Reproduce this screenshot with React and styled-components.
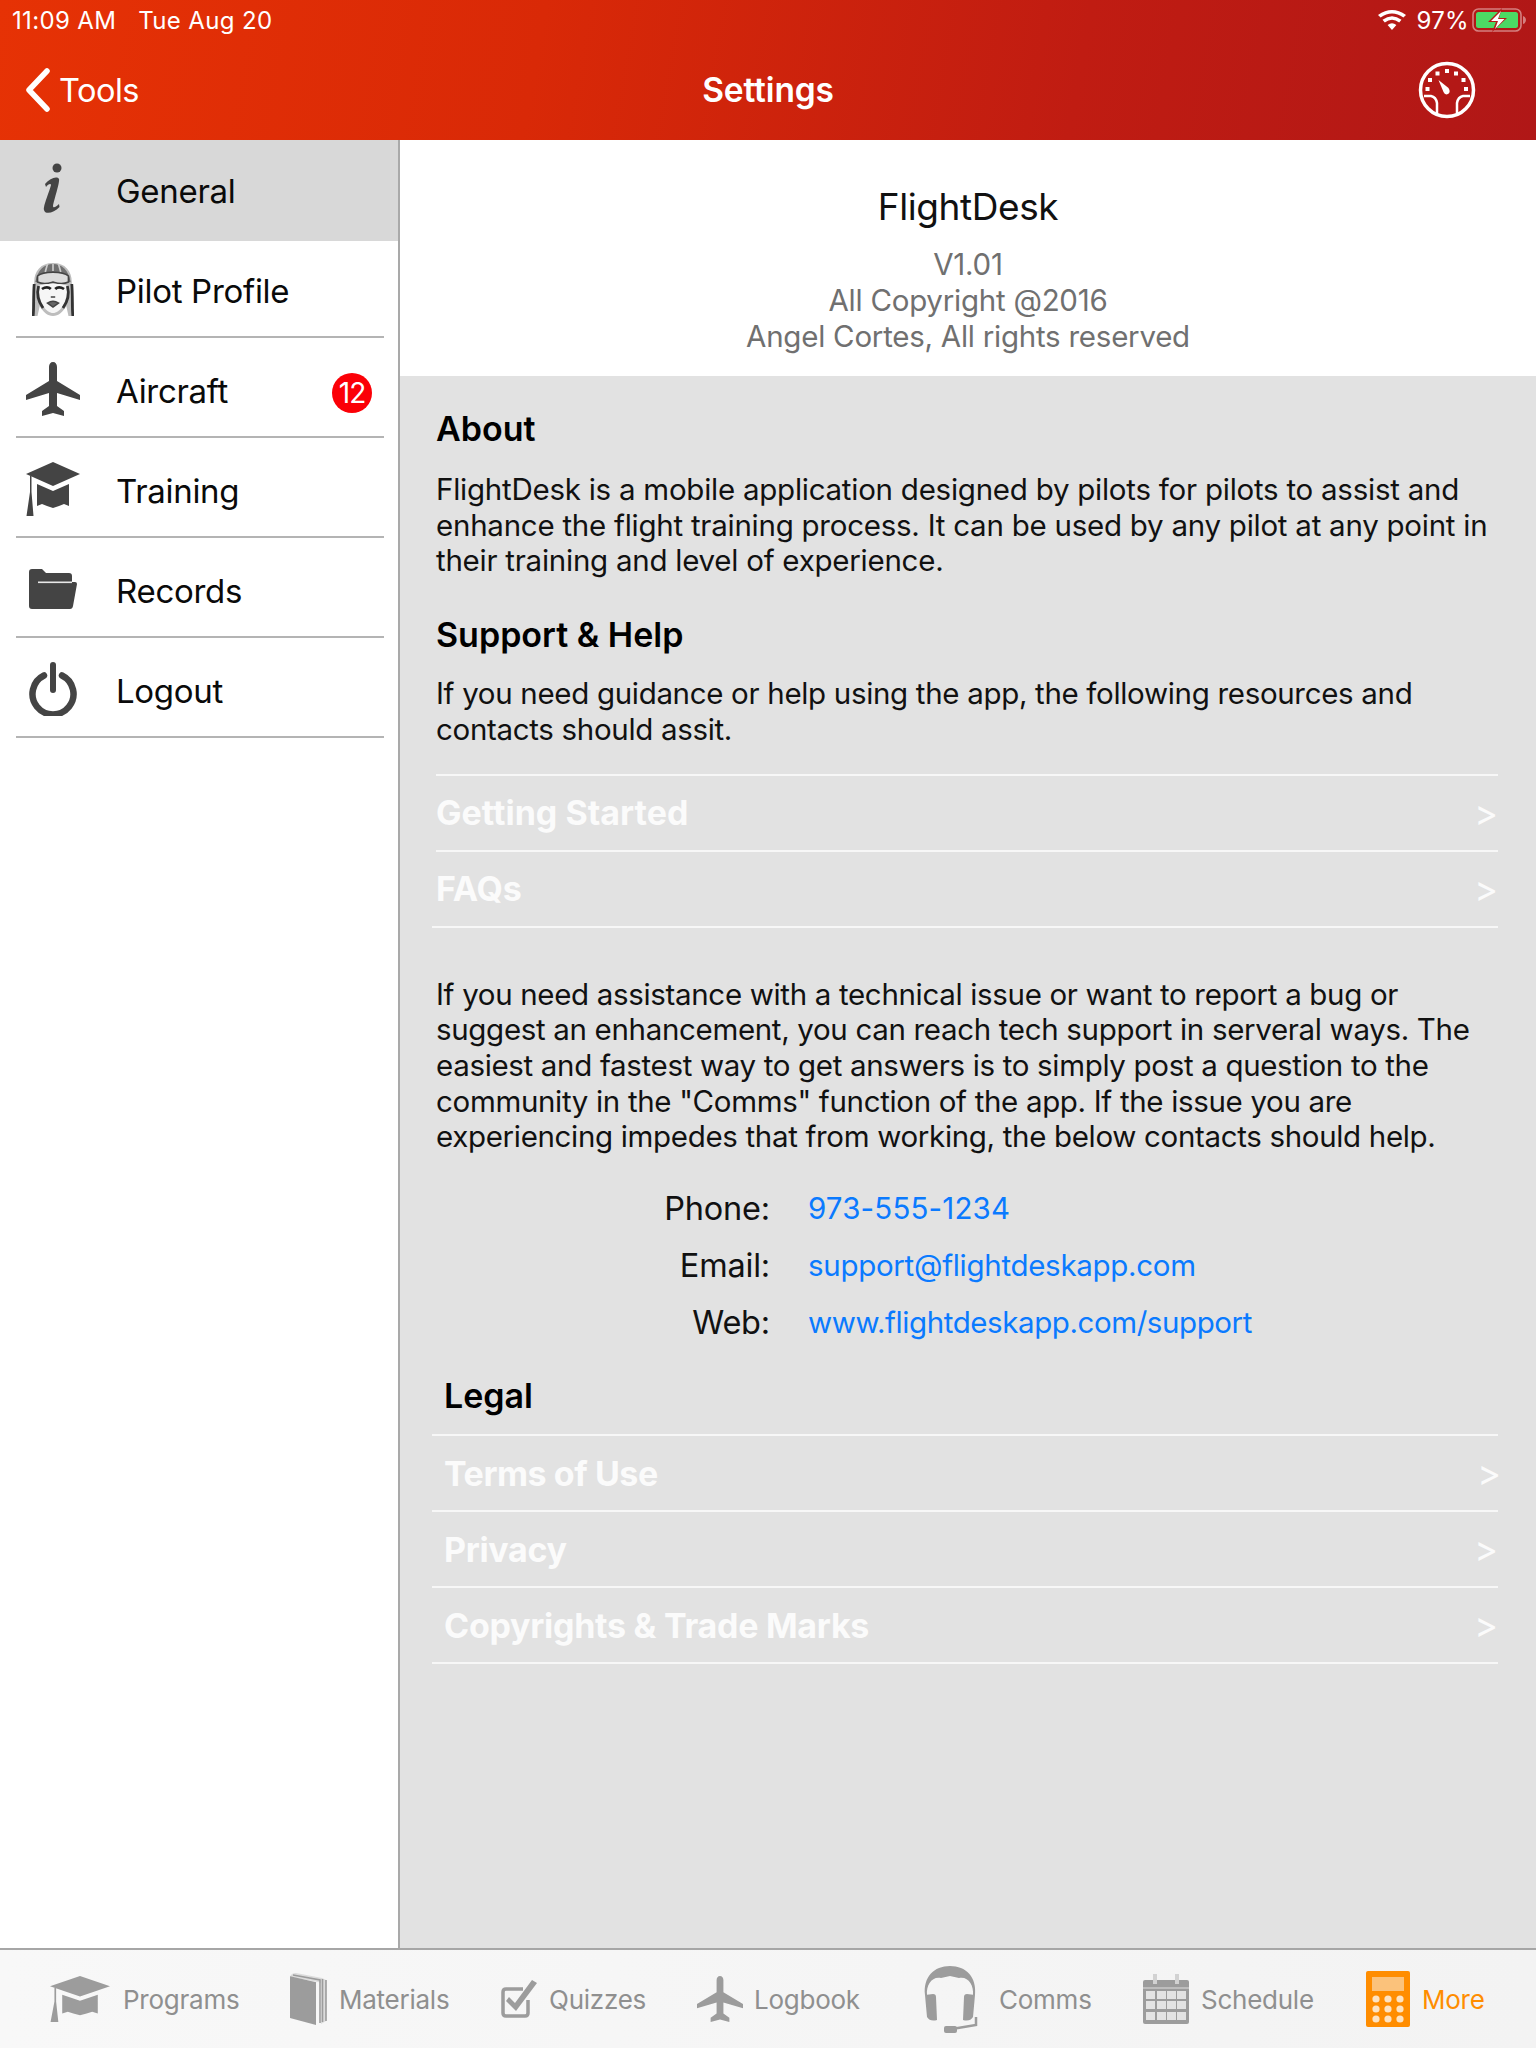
import React from "react";
import styled, { createGlobalStyle } from "styled-components";

const Global = createGlobalStyle`
  html, body { margin: 0; padding: 0; background: #fff; }
  body { font-family: Inter, "Liberation Sans", sans-serif; }
`;
const Page = styled.div`
  width: 1536px; height: 2048px; display: flex; flex-direction: column; overflow: hidden; background: #fff;
`;
const Header = styled.header`
  height: 140px; flex: none; position: relative; color: #fff;
  background: linear-gradient(100deg, #e63205 0%, #d92907 35%, #c01c12 70%, #b01717 100%);
`;
const StatusBar = styled.div`
  height: 40px; display: flex; align-items: center; padding: 0 10px 0 12px; font-size: 24px; letter-spacing: 0.35px;
`;
const StatusText = styled.span`
  margin: 0 ${p => p.$right || 0}px 0 ${p => p.$left || 0}px;
`;
const Spacer = styled.div`flex: 1;`;
const NavBar = styled.div`
  height: 100px; display: grid; grid-template-columns: 1fr auto 1fr; align-items: center; padding: 0 25px 8px;
`;
const Back = styled.div`
  display: flex; align-items: center; gap: 8px; font-size: 32.5px; letter-spacing: -0.5px;
`;
const Title = styled.div`
  font-size: 33.5px; font-weight: 600; letter-spacing: -0.15px;
`;
const NavRight = styled.div`
  display: flex; justify-content: flex-end; padding-right: 35px;
`;
const Body = styled.div`
  flex: 1; display: flex; min-height: 0; border-top: 1px solid #a9a9a9; margin-top: -1px;
`;
const Sidebar = styled.nav`
  width: 398px; flex: none; border-right: 2px solid #a9a9a9; background: #fff;
`;
const SideRow = styled.div`
  height: ${p => p.$h}px; box-sizing: border-box; padding-top: ${p => p.$pad}px; position: relative; display: flex; align-items: center; padding-left: 26px;
  background: ${p => p.$active ? "#d8d8d8" : "#fff"};
`;
const SideRule = styled.div`
  height: 2px; margin: 0 14px 0 16px; background: #b4b4b4;
`;
const SideIcon = styled.div`
  width: 54px; height: 54px; margin-bottom: 4px; display: flex; align-items: center; justify-content: center; color: #444; flex: none;
`;
const SideLabel = styled.span`
  margin-left: 36px; font-size: 33px; color: #0a0a0a; letter-spacing: -0.3px;
`;
const Badge = styled.span`
  position: absolute; right: 26px; top: 35px; width: 40px; height: 40px; border-radius: 50%; background: #fb0007; color: #fff;
  font-size: 28px; display: flex; align-items: center; justify-content: center; letter-spacing: -1px;
`;
const Main = styled.main`
  flex: 1; display: flex; flex-direction: column; min-width: 0;
`;
const Intro = styled.section`
  height: 236px; flex: none; background: #fff; display: flex; flex-direction: column; align-items: center; padding-top: 46px; box-sizing: border-box;
`;
const AppName = styled.h1`
  margin: 0 0 18px; font-size: 37px; line-height: 42px; font-weight: 400; color: #111; letter-spacing: -0.4px;
`;
const IntroLine = styled.div`
  font-size: 29.5px; line-height: 36px; color: #707070; letter-spacing: -0.25px;
`;
const Panel = styled.section`
  flex: 1; background: #e2e2e2; padding: 35px 38px 0 32px; min-height: 0;
`;
const Heading = styled.h2`
  margin: ${p => p.$top || 0}px 0 0 ${p => p.$left || 4}px; font-size: 34px; line-height: 36px; font-weight: 600; color: #000; letter-spacing: 0;
`;
const Prose = styled.p`
  margin: ${p => p.$top || 0}px 0 0 4px; font-size: 29.5px; line-height: 35.7px; color: #111; white-space: nowrap;
  letter-spacing: ${p => p.$ls ?? -0.25}px;
`;
const LinkList = styled.div`
  margin-top: ${p => p.$top || 0}px;
`;
const LinkRow = styled.div`
  height: 74px; display: flex; align-items: center; justify-content: space-between;
  border-bottom: 2px solid #f7f7f7; color: #fbfbfb; padding: 0 0 0 ${p => p.$left || 4}px;
  ${p => p.$first ? `border-top: 2px solid #f7f7f7; margin-left: ${p.$inset || 0}px; padding-left: ${(p.$left || 4) - (p.$inset || 0)}px;` : ""}
`;
const LinkText = styled.span`
  font-size: 34px; font-weight: 700; letter-spacing: ${p => p.$ls ?? -0.15}px;
`;
const Chevron = styled.span`
  font-size: 36px; font-weight: 400; margin-right: ${p => p.$shift || 0}px;
`;
const Contact = styled.div`
  margin-top: 25px; display: grid; grid-template-columns: 338px auto; column-gap: 38px; justify-content: start; grid-auto-rows: 56.8px; align-items: center;
`;
const ContactLabel = styled.span`
  font-size: 32.5px; color: #111; text-align: right; letter-spacing: -0.2px;
`;
const ContactLink = styled.span`
  font-size: 29.5px; color: #0a7aff; letter-spacing: ${p => p.$ls}px;
`;
const TabBar = styled.footer`
  height: 100px; flex: none; box-sizing: border-box; border-top: 2px solid #a6a6a6; background: linear-gradient(90deg, #f8f8f8, #f3f3f3);
  display: flex; align-items: center; padding-left: 50px; position: relative;
`;
const Tab = styled.div`
  display: flex; align-items: center; flex: none; width: ${p => p.$w}px; gap: ${p => p.$gap || 12}px;
  color: ${p => p.$active ? "#ff8d00" : "#9c9c9c"};
`;
const TabLabel = styled.span`
  font-size: 26px; color: ${p => p.$active ? "#ff8d00" : "#8f8f8f"}; letter-spacing: -0.25px;
`;
const TabIconBox = styled.div`
  flex: none; display: flex; width: ${p => p.$w}px; justify-content: center;
`;
const Glyph = styled.svg`
  display: block; flex: none;
`;

const InfoIcon = () => (
  <Glyph width="54" height="54" viewBox="0 0 54 54">
    <circle cx="31" cy="6" r="4.5" fill="currentColor" />
    <path d="M19 22 C24 16 31 14 33 17 C34 20 28 38 27 44 C27 46 29 46 33 42 L33.5 45 C28 51 19 53 18 48 C17 44 24 28 25 23 C25 21 22 22 20 25 Z" fill="currentColor" />
  </Glyph>
);
const PilotIcon = () => (
  <Glyph width="42" height="54" viewBox="8 0 38 54" preserveAspectRatio="none">
    <path d="M27 1 C38 1 44 9 44 20 C44 30 47 40 46 54 L41 54 L39 44 C36 50 32 54 27 54 C22 54 18 50 15 44 L13 54 L8 54 C7 40 10 30 10 20 C10 9 16 1 27 1 Z" fill="#bdbdbd" />
    <path d="M27 2 C35 2 41 8 43 20 L11 20 C13 8 19 2 27 2 Z" fill="#707070" />
    <path d="M22 2 L20 10 M32 2 L34 10 M27 2 V9" stroke="#ccc" strokeWidth="1.5" />
    <path d="M13 14 C18 9 36 9 41 14 L41 20 C35 23 30 21 27 20 C24 21 19 23 13 20 Z" fill="#dcdcdc" stroke="#444" strokeWidth="1.5" />
    <path d="M14 24 C14 42 21 51 27 51 C33 51 40 42 40 24 C36 21 18 21 14 24 Z" fill="#f6f6f6" />
    <path d="M17 27 C20 25 23 25 25 27 M29 27 C31 25 34 25 37 27" stroke="#222" strokeWidth="2.5" fill="none" />
    <path d="M25 35 L29 35 M22 41 C25 39 29 39 32 41 L27 45 Z" stroke="#444" strokeWidth="1.5" fill="#666" />
    <path d="M10 22 C9 34 10 46 9 54 M44 22 C45 34 44 46 45 54" stroke="#333" strokeWidth="2.5" fill="none" />
    <path d="M14 24 C12 32 14 40 18 46 M40 24 C42 32 40 40 36 46" stroke="#333" strokeWidth="2.5" fill="none" />
  </Glyph>
);
const PlaneIcon = ({ size = 54 }) => (
  <Glyph width={size} height={size} viewBox="0 0 54 54">
    <path d="M27 0 C29.5 0 31 2 31 5 V19 L54 33 V38 L31 31 V44 L38 49 V54 L27 51 L16 54 V49 L23 44 V31 L0 38 V33 L23 19 V5 C23 2 24.5 0 27 0 Z" fill="currentColor" />
  </Glyph>
);
const CapIcon = ({ w = 54, h = 54 }) => (
  <Glyph width={w} height={h} viewBox="0 0 54 54" preserveAspectRatio="none">
    <path d="M27 0 L54 12 L27 24 L0 12 Z" fill="currentColor" />
    <path d="M11 22 L27 29 L43 22 V44 L38 42 L33 44 L27 46 L21 44 L16 42 L11 44 Z" fill="currentColor" />
    <path d="M4 14 V30 L0.5 54 H7.5 L5.5 30 V14 Z" fill="currentColor" />
  </Glyph>
);
const FolderIcon = () => (
  <Glyph width="48" height="40" viewBox="0 0 48 40">
    <path d="M0 3 Q0 0 3 0 H13 L17 4 H40 Q43 4 43 7 V13 H46 Q48 13 48 15 L44 37 Q43.5 40 41 40 H3 Q0 40 0 37 Z" fill="currentColor" />
    <rect x="9" y="12.5" width="34" height="1.6" fill="#e8e8e8" />
  </Glyph>
);
const PowerIcon = () => (
  <Glyph width="48" height="54" viewBox="0 0 48 54">
    <path d="M15 13.5 A20.5 20.5 0 1 0 33 13.5" fill="none" stroke="currentColor" strokeWidth="6.5" strokeLinecap="round" />
    <path d="M24 3 V28" fill="none" stroke="currentColor" strokeWidth="6" strokeLinecap="round" />
  </Glyph>
);
const GaugeIcon = () => (
  <Glyph width="58" height="58" viewBox="0 0 58 58">
    <circle cx="29" cy="29" r="26.5" fill="none" stroke="#fff" strokeWidth="3.5" />
    <path d="M6 35 H13 Q18 36 19 42 V53 M52 35 H45 Q40 36 39 42 V53" fill="none" stroke="#fff" strokeWidth="2.5" />
    {[[9.5, 28], [12, 19], [19.5, 12.5], [29, 10], [38, 12.5], [45.5, 19], [48, 28]].map(([x, y]) => (
      <rect key={x} x={x - 2} y={y - 2} width="4" height="4" fill="#fff" />
    ))}
    <path d="M20.5 19 L30.5 27 Q33 31 30 33 Q27 34.5 25.5 31 Z" fill="#fff" />
  </Glyph>
);
const WifiIcon = () => (
  <Glyph width="28" height="20" viewBox="0 0 28 20">
    <path d="M14 20 L9.6 15 Q14 11.6 18.4 15 Z M6.8 12.4 L4.5 9.7 Q14 2.6 23.5 9.7 L21.2 12.4 Q14 7 6.8 12.4 Z M2.6 7.6 L0 5 Q14 -5 28 5 L25.4 7.6 Q14 -0.6 2.6 7.6 Z" fill="#fff" />
  </Glyph>
);
const BatteryIcon = () => (
  <Glyph width="54" height="24" viewBox="0 0 54 24">
    <rect x="1" y="1" width="48" height="22" rx="5.5" fill="none" stroke="#fff" strokeOpacity="0.45" strokeWidth="1.6" />
    <path d="M51 8 Q54 9 54 12 Q54 15 51 16 Z" fill="#fff" fillOpacity="0.45" />
    <rect x="4" y="4" width="42" height="16" rx="2.5" fill="#4cd964" />
    <path d="M30 0 L16 14 H24 L20 24 L35 10 H27 Z" fill="#b41816" />
    <path d="M29 3 L19 13 H26 L23 21 L32.5 11 H26 Z" fill="#fff" />
  </Glyph>
);
const BookIcon = () => (
  <Glyph width="37" height="52" viewBox="0 0 37 52">
    <path d="M0 4 L26 10 V52 L0 45 Z" fill="currentColor" />
    <path d="M0 4 Q1 0 6 0 L32 5 L36 7 V48 L31 51 V10 L28 9 Z" fill="#dcdcdc" />
    <path d="M3 2 L30 7 V50 M32.5 6 V49 M36 7 V48 M0 4 L26 10" stroke="currentColor" strokeWidth="1.6" fill="none" />
  </Glyph>
);
const QuizIcon = () => (
  <Glyph width="36" height="38" viewBox="0 0 36 38">
    <path d="M27 20 V33 Q27 36 24 36 H5 Q2 36 2 33 V12 Q2 9 5 9 H22" fill="none" stroke="currentColor" strokeWidth="3.5" />
    <path d="M8 17 L14 23 L31 0 L36 3 L15 31 L5 21 Z" fill="currentColor" />
  </Glyph>
);
const HeadsetIcon = () => (
  <Glyph width="56" height="68" viewBox="0 0 56 68">
    <path d="M3 30 C1 12 12 1 28 1 C44 1 55 12 53 30 L51 30 C52 20 46 11 37 13 L28 11 L19 13 C10 11 4 20 5 30 Z" fill="currentColor" />
    <path d="M3 30 L11 29 Q14 29 14 32 L15 55 Q8 57 5 52 Z" fill="currentColor" />
    <path d="M53 30 L45 29 Q42 29 42 32 L41 55 Q48 57 51 52 Z" fill="currentColor" />
    <path d="M54 52 V60 L24 65" fill="none" stroke="currentColor" strokeWidth="2.5" />
    <rect x="22" y="61" width="13" height="7" rx="2" fill="currentColor" />
  </Glyph>
);
const CalendarIcon = () => (
  <Glyph width="46" height="50" viewBox="0 0 46 50">
    <rect x="0" y="6" width="46" height="44" rx="2" fill="currentColor" />
    <rect x="10" y="0" width="4" height="10" fill="#d2d2d2" />
    <rect x="32" y="0" width="4" height="10" fill="#d2d2d2" />
    <rect x="0" y="13" width="46" height="2" fill="#bdbdbd" />
    {[17, 27, 38].flatMap(y => [3, 14, 24, 34].map(x => (
      <rect key={`${x}-${y}`} x={x} y={y} width="9" height="8" fill="#e3e3e3" />
    )))}
  </Glyph>
);
const CalcIcon = () => (
  <Glyph width="44" height="56" viewBox="0 0 44 56">
    <rect width="44" height="56" rx="2" fill="currentColor" />
    <rect x="6" y="6" width="32" height="14" fill="#fbc27b" />
    {[28, 38, 48].flatMap(y => [10, 22, 34].map(x => (
      <circle key={`${x}-${y}`} cx={x} cy={y} r="3.6" fill="#fde3c2" />
    )))}
  </Glyph>
);

const sideItems = [
  { label: "General", icon: <InfoIcon />, active: true, h: 101, pad: 0 },
  { label: "Pilot Profile", icon: <PilotIcon />, h: 95, pad: 5, rule: true },
  { label: "Aircraft", icon: <PlaneIcon />, badge: 12, h: 98, pad: 8, rule: true },
  { label: "Training", icon: <CapIcon />, h: 98, pad: 8, rule: true },
  { label: "Records", icon: <FolderIcon />, h: 98, pad: 8, rule: true },
  { label: "Logout", icon: <PowerIcon />, h: 98, pad: 8, rule: true },
];
const tabs = [
  { label: "Programs", w: 240, iw: 60, gap: 13, icon: <CapIcon w={60} h={46} /> },
  { label: "Materials", w: 211, iw: 37, gap: 12, icon: <BookIcon /> },
  { label: "Quizzes", w: 196, iw: 36, gap: 12, icon: <QuizIcon /> },
  { label: "Logbook", w: 225, iw: 46, gap: 11, icon: <PlaneIcon size={46} /> },
  { label: "Comms", w: 221, iw: 56, gap: 21, icon: <HeadsetIcon /> },
  { label: "Schedule", w: 223, iw: 46, gap: 12, icon: <CalendarIcon /> },
  { label: "More", w: 118, iw: 44, gap: 12, icon: <CalcIcon />, active: true },
];

export default function App() {
  return (
    <Page>
      <Global />
      <Header>
        <StatusBar>
          <StatusText $right={22}>11:09 AM</StatusText>
          <StatusText>Tue Aug 20</StatusText>
          <Spacer />
          <WifiIcon />
          <StatusText $left={10} $right={3}>97%</StatusText>
          <BatteryIcon />
        </StatusBar>
        <NavBar>
          <Back>
            <Glyph width="26" height="44" viewBox="0 0 26 44">
              <path d="M22 3 L4 22 L22 41" fill="none" stroke="#fff" strokeWidth="5.5" strokeLinecap="round" strokeLinejoin="round" />
            </Glyph>
            Tools
          </Back>
          <Title>Settings</Title>
          <NavRight><GaugeIcon /></NavRight>
        </NavBar>
      </Header>
      <Body>
        <Sidebar>
          {sideItems.map(it => (
            <React.Fragment key={it.label}>
              <SideRow $active={it.active} $h={it.h} $pad={it.pad}>
                <SideIcon>{it.icon}</SideIcon>
                <SideLabel>{it.label}</SideLabel>
                {it.badge ? <Badge>{it.badge}</Badge> : null}
              </SideRow>
              {it.rule ? <SideRule /> : null}
            </React.Fragment>
          ))}
        </Sidebar>
        <Main>
          <Intro>
            <AppName>FlightDesk</AppName>
            <IntroLine>V1.01</IntroLine>
            <IntroLine>All Copyright @2016</IntroLine>
            <IntroLine>Angel Cortes, All rights reserved</IntroLine>
          </Intro>
          <Panel>
            <Heading>About</Heading>
            <Prose $top={25}>
              FlightDesk is a mobile application designed by pilots for pilots to assist and<br />
              enhance the flight training process. It can be used by any pilot at any point in<br />
              their training and level of experience.
            </Prose>
            <Heading $top={38}>Support &amp; Help</Heading>
            <Prose $top={23} $ls={-0.32}>
              If you need guidance or help using the app, the following resources and<br />
              contacts should assit.
            </Prose>
            <LinkList $top={26}>
              <LinkRow $first $inset={4}><LinkText $ls={0}>Getting Started</LinkText><Chevron>&gt;</Chevron></LinkRow>
              <LinkRow><LinkText>FAQs</LinkText><Chevron>&gt;</Chevron></LinkRow>
            </LinkList>
            <Prose $top={49} $ls={-0.33}>
              If you need assistance with a technical issue or want to report a bug or<br />
              suggest an enhancement, you can reach tech support in serveral ways. The<br />
              easiest and fastest way to get answers is to simply post a question to the<br />
              community in the "Comms" function of the app. If the issue you are<br />
              experiencing impedes that from working, the below contacts should help.
            </Prose>
            <Contact>
              <ContactLabel>Phone:</ContactLabel><ContactLink $ls={0.15}>973-555-1234</ContactLink>
              <ContactLabel>Email:</ContactLabel><ContactLink $ls={-0.3}>support@flightdeskapp.com</ContactLink>
              <ContactLabel>Web:</ContactLabel><ContactLink $ls={-0.42}>www.flightdeskapp.com/support</ContactLink>
            </Contact>
            <Heading $top={28} $left={12}>Legal</Heading>
            <LinkList $top={20}>
              <LinkRow $first $left={12}><LinkText $ls={-0.45}>Terms of Use</LinkText><Chevron $shift={-3}>&gt;</Chevron></LinkRow>
              <LinkRow $left={12}><LinkText $ls={-0.35}>Privacy</LinkText><Chevron>&gt;</Chevron></LinkRow>
              <LinkRow $left={12}><LinkText $ls={-0.27}>Copyrights &amp; Trade Marks</LinkText><Chevron>&gt;</Chevron></LinkRow>
            </LinkList>
          </Panel>
        </Main>
      </Body>
      <TabBar>
        {tabs.map(t => (
          <Tab key={t.label} $w={t.w} $gap={t.gap} $active={t.active}>
            <TabIconBox $w={t.iw}>{t.icon}</TabIconBox>
            <TabLabel $active={t.active}>{t.label}</TabLabel>
          </Tab>
        ))}
      </TabBar>
    </Page>
  );
}
